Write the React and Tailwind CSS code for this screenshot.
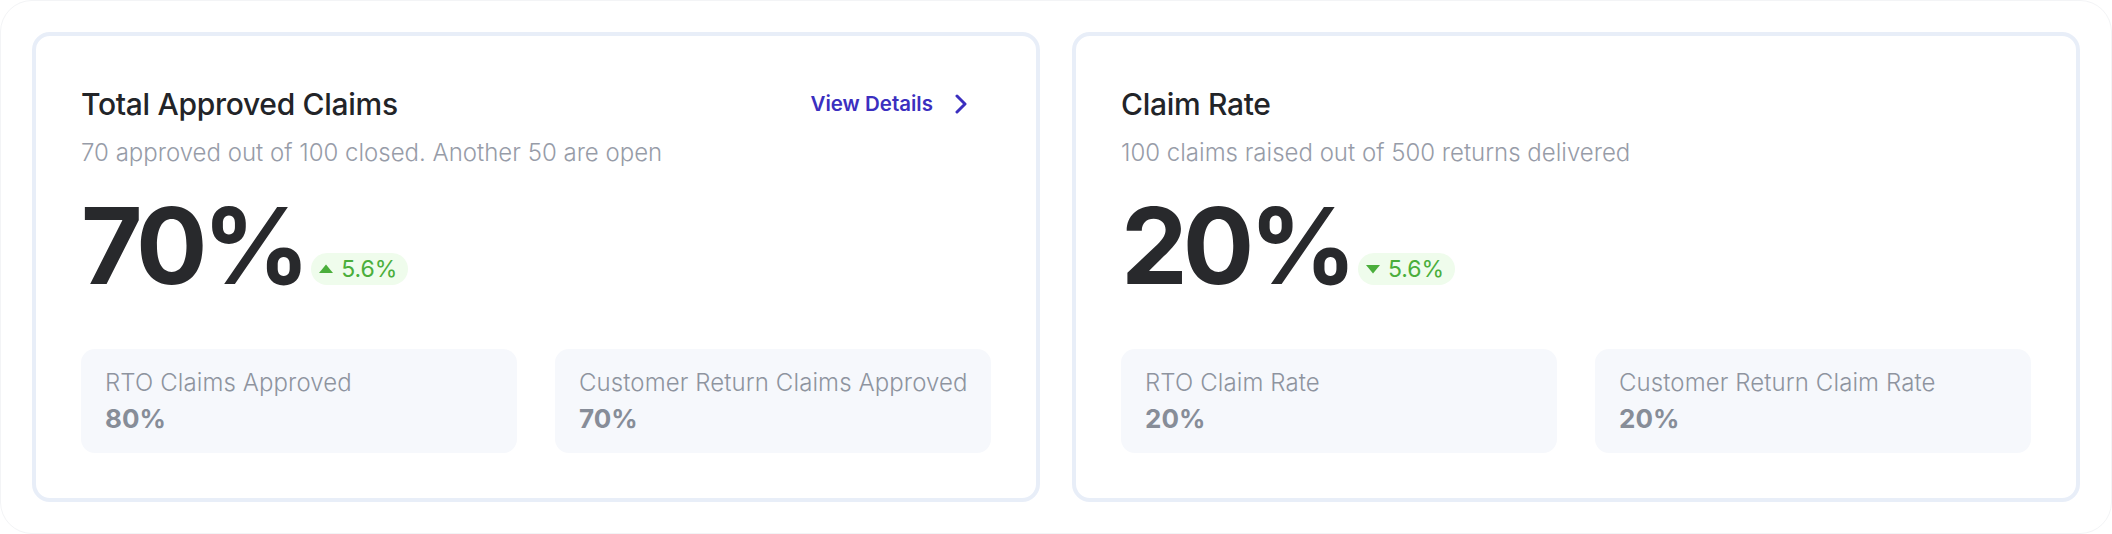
import React from "react";

const font = { fontFamily: "Inter, 'Noto Sans', sans-serif" };

const Triangle = ({ down }) => (
  <svg width="16" height="10" viewBox="0 0 16 10" className="shrink-0">
    {down ? (
      <path d="M1 1h14L8 9.5z" fill="#4aae3b" />
    ) : (
      <path d="M1 9h14L8 0.5z" fill="#4aae3b" />
    )}
  </svg>
);

const StatBox = ({ label, value }) => (
  <div className="flex-1 basis-0 min-w-0 rounded-[14px] bg-[#f6f8fc] px-6 pt-[18px] pb-[18px]">
    <div className="text-[24px] leading-8 font-light text-[#8e949f] whitespace-nowrap tracking-[0.1px]">
      {label}
    </div>
    <div className="mt-1 text-[26px] leading-8 font-bold text-[#878d98]">
      {value}
    </div>
  </div>
);

const MetricCard = ({ title, subtitle, value, change, down, link, stats }) => (
  <div className="flex-1 basis-0 min-w-0 rounded-[18px] border-4 border-[#e8eef8] bg-white px-[45px] pt-[50px] pb-[44px] flex flex-col">
    <div className="flex items-center justify-between h-9">
      <h2 className="text-[30px] leading-9 font-medium text-[#222428] tracking-[-0.3px]">
        {title}
      </h2>
      {link && (
        <button className="mr-[24px] flex items-center gap-[22px] text-[20.5px] leading-7 font-semibold text-[#3b2fbf]">
          {link}
          <svg width="12" height="20" viewBox="0 0 12 20" fill="none">
            <path
              d="M2 2l8 8-8 8"
              stroke="#3b2fbf"
              strokeWidth="3"
              strokeLinecap="round"
              strokeLinejoin="round"
            />
          </svg>
        </button>
      )}
    </div>
    <p className="mt-[15px] text-[24px] leading-8 font-light text-[#979ca8]">
      {subtitle}
    </p>
    <div className="mt-[23px] flex items-end gap-[6px]">
      <span className="text-[106px] leading-[108px] font-bold text-[#28292c] tracking-[-5px]">
        {value}
      </span>
      <span className="mb-[15px] flex h-8 items-center gap-[7px] rounded-full bg-[#effcec] pl-[7px] pr-[11px] text-[23px] text-[#4aae3b]">
        <Triangle down={down} />
        {change}
      </span>
    </div>
    <div className="mt-[49px] flex gap-[38px]">
      {stats.map((s) => (
        <StatBox key={s.label} label={s.label} value={s.value} />
      ))}
    </div>
  </div>
);

export default function App() {
  return (
    <div style={font} className="w-[2112px] h-[534px] bg-white">
      <div className="h-full rounded-[32px] border border-[#f3f4f6] p-[31px] flex gap-8">
        <MetricCard
          title="Total Approved Claims"
          subtitle="70 approved out of 100 closed. Another 50 are open"
          value="70%"
          change="5.6%"
          link="View Details"
          stats={[
            { label: "RTO Claims Approved", value: "80%" },
            { label: "Customer Return Claims Approved", value: "70%" },
          ]}
        />
        <MetricCard
          title="Claim Rate"
          subtitle="100 claims raised out of 500 returns delivered"
          value="20%"
          change="5.6%"
          down
          stats={[
            { label: "RTO Claim Rate", value: "20%" },
            { label: "Customer Return Claim Rate", value: "20%" },
          ]}
        />
      </div>
    </div>
  );
}
